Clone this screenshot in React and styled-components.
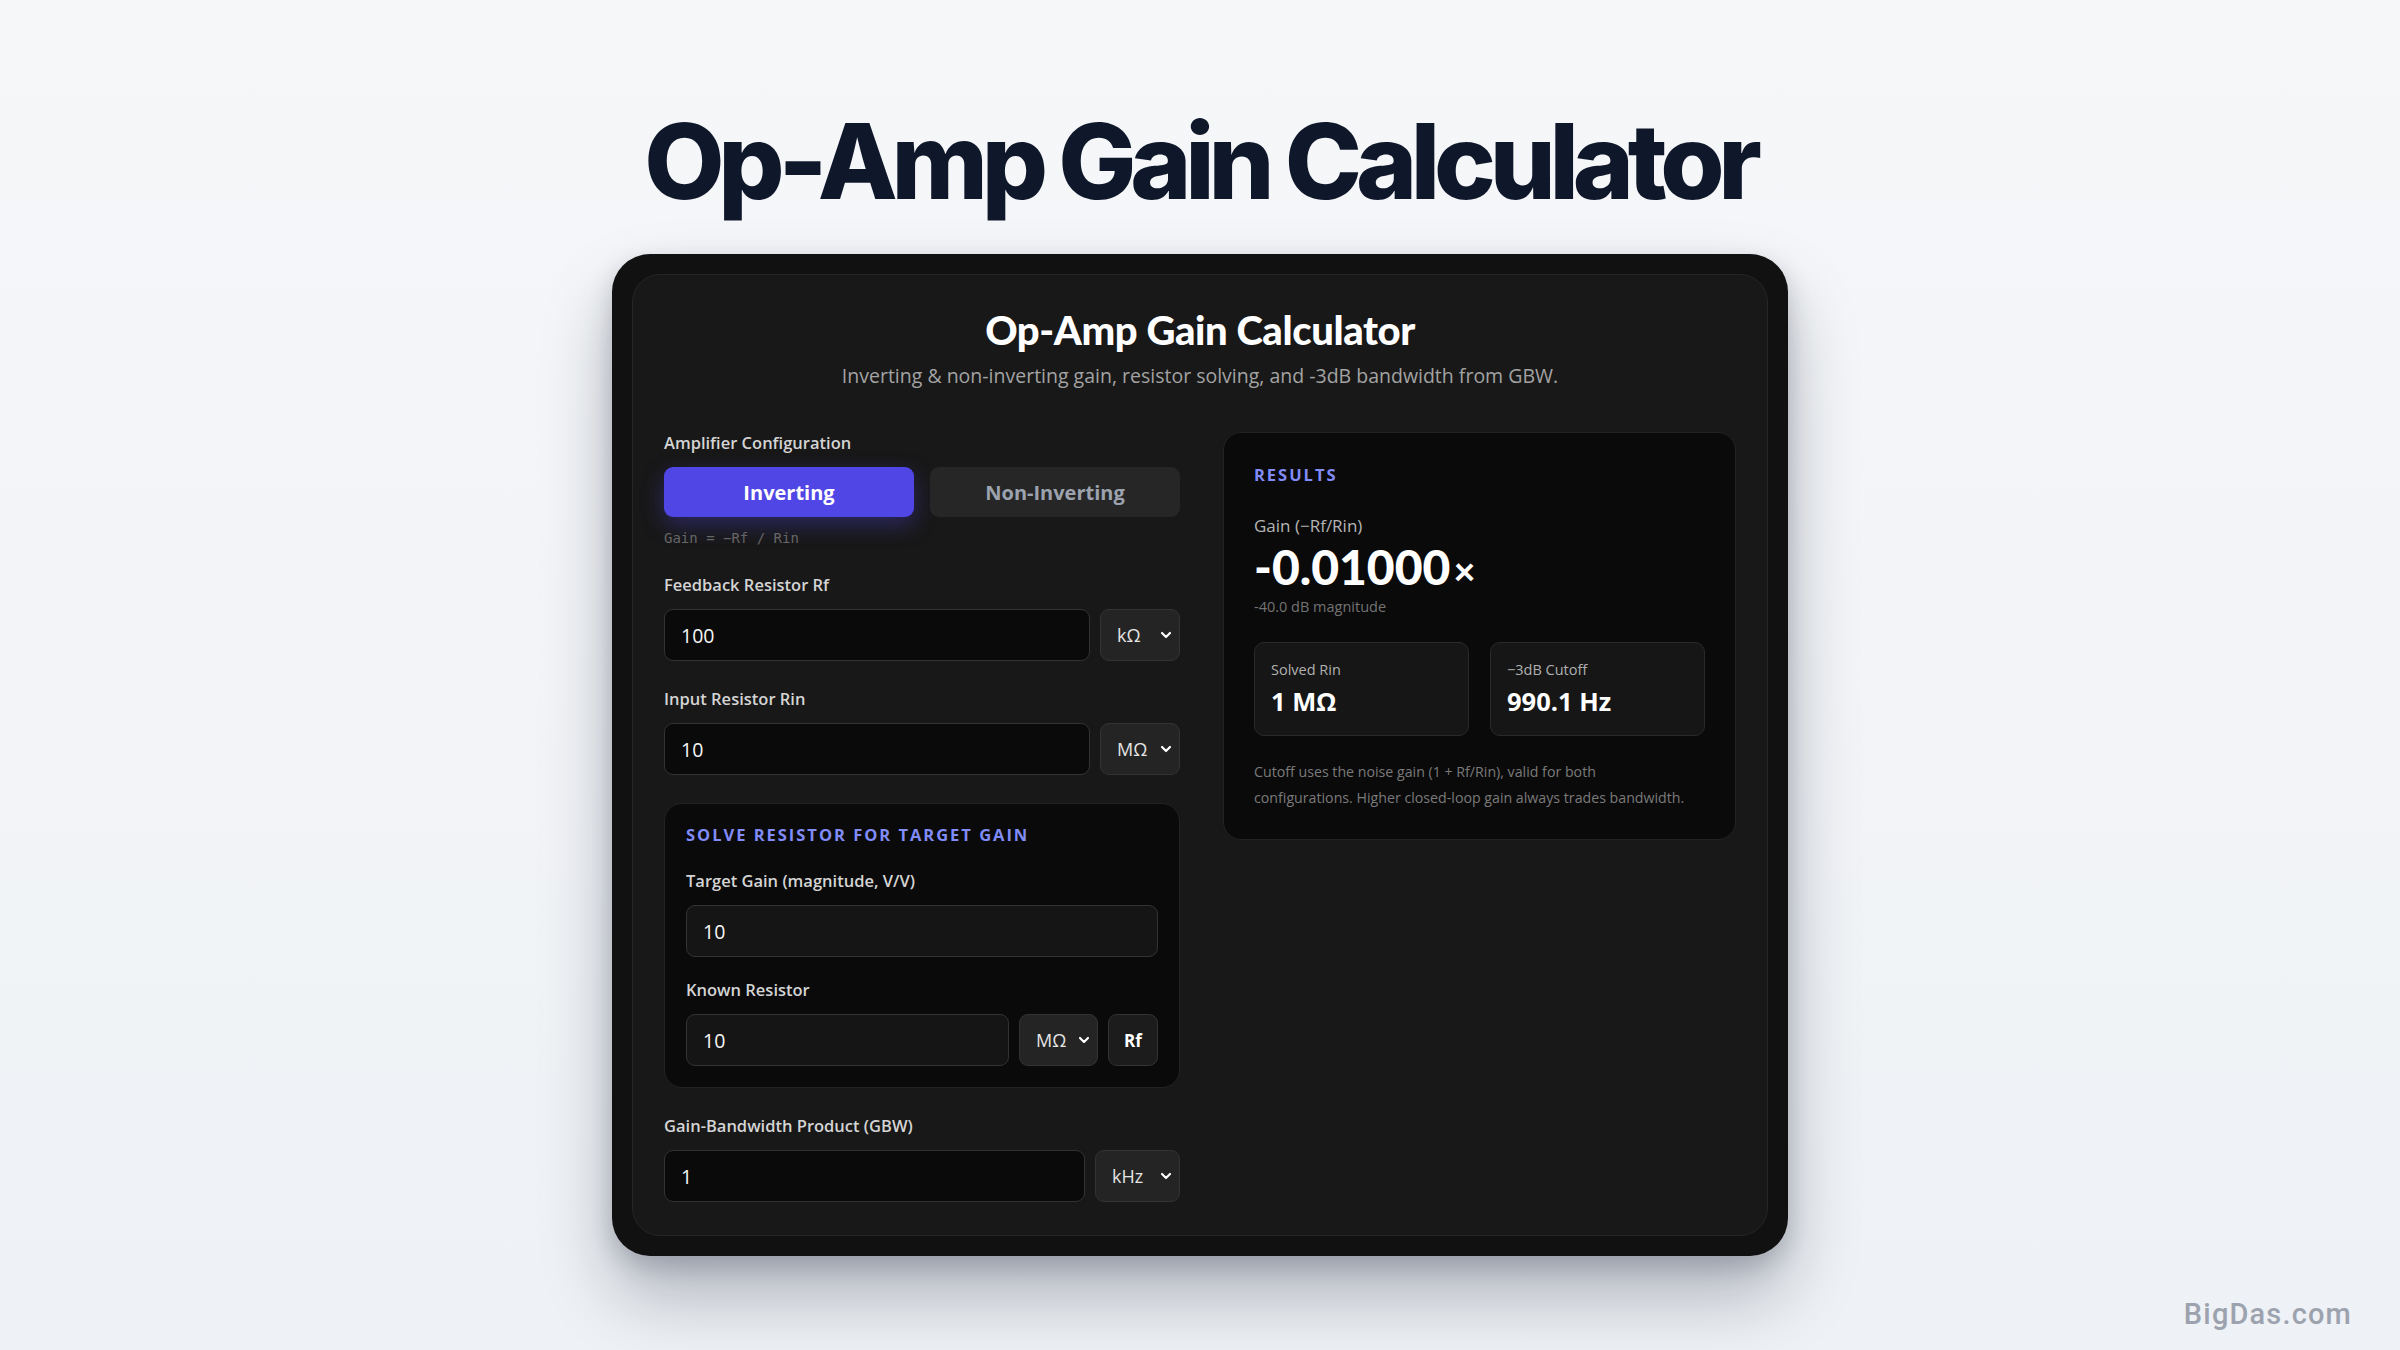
import React from "react"
import styled, { createGlobalStyle } from "styled-components"
import { ChevronDown } from "lucide-react"

const GlobalStyle = createGlobalStyle`
  * { box-sizing: border-box; }
  html, body {
    margin: 0;
    padding: 0;
  }
  body {
    font-family: "Open Sans", "Noto Sans", sans-serif;
    background: linear-gradient(180deg, #f6f7f9 0%, #eef1f5 100%);
    min-height: 100vh;
  }
`

const Page = styled.div`
  position: relative;
  min-height: 100vh;
  display: flex;
  flex-direction: column;
  align-items: center;
  padding-top: 105px;
`

const PageTitle = styled.h1`
  margin: 0 0 37px;
  font-family: Inter, "Liberation Sans", sans-serif;
  font-weight: 800;
  font-size: 104px;
  line-height: 112px;
  letter-spacing: -0.06em;
  color: #0f172a;
`

const Frame = styled.div`
  width: 1176px;
  padding: 20px;
  background: #111111;
  border-radius: 38px;
  box-shadow: 0 40px 70px rgba(15, 23, 42, 0.28), 0 10px 24px rgba(15, 23, 42, 0.18);
`

const Card = styled.div`
  background: #181818;
  border: 1px solid #262626;
  border-radius: 28px;
  padding: 30px 31px 33px;
`

const Header = styled.header`
  text-align: center;
  margin-bottom: 43px;
`

const Heading = styled.h2`
  margin: 0;
  font-family: Lato, "Open Sans", sans-serif;
  font-weight: 900;
  font-size: 40px;
  line-height: 50px;
  color: #ffffff;
  letter-spacing: -0.01em;
`

const Subtitle = styled.p`
  margin: 8px 0 0;
  font-size: 19.5px;
  line-height: 26px;
  color: #a3a3a3;
`

const Grid = styled.div`
  display: grid;
  grid-template-columns: 516px 513px;
  justify-content: space-between;
  align-items: start;
`

const Column = styled.div`
  display: flex;
  flex-direction: column;
`

const Field = styled.div`
  display: flex;
  flex-direction: column;
  gap: 13px;
  margin-top: ${(p) => p.$top || 0}px;
`

const Label = styled.label`
  font-size: 16.5px;
  line-height: 22px;
  font-weight: 600;
  color: #d4d4d4;
`

const Toggle = styled.div`
  display: grid;
  grid-template-columns: 1fr 1fr;
  gap: 16px;
`

const ToggleButton = styled.button`
  height: 50px;
  border: none;
  border-radius: 9px;
  font-family: inherit;
  font-size: 20px;
  font-weight: 700;
  background: ${(p) => (p.$active ? "#4f46e5" : "#262626")};
  color: ${(p) => (p.$active ? "#ffffff" : "#9ca3af")};
  box-shadow: ${(p) => (p.$active ? "0 8px 22px rgba(79, 70, 229, 0.35)" : "none")};
`

const Hint = styled.div`
  margin-top: 12px;
  font-family: "DejaVu Sans Mono", "Liberation Mono", monospace;
  font-size: 14px;
  line-height: 18px;
  color: #666666;
`

const Row = styled.div`
  display: flex;
  gap: 10px;
`

const Input = styled.div`
  flex: 1 1 auto;
  height: 52px;
  display: flex;
  align-items: center;
  padding: 0 16px;
  border: 1px solid #333333;
  border-radius: 9px;
  background: ${(p) => (p.$raised ? "#151515" : "#0a0a0a")};
  color: #f5f5f5;
  font-size: 19.5px;
`

const Select = styled.div`
  flex: none;
  width: ${(p) => p.$w || 80}px;
  height: 52px;
  display: flex;
  align-items: center;
  justify-content: space-between;
  padding: 0 5px 0 16px;
  border: 1px solid #333333;
  border-radius: 9px;
  background: #242424;
  color: #e5e5e5;
  font-size: 18px;

  svg {
    color: #ffffff;
  }
`

const SideButton = styled.button`
  flex: none;
  width: 50px;
  height: 52px;
  border: 1px solid #333333;
  border-radius: 9px;
  background: #1c1c1c;
  color: #ffffff;
  font-family: inherit;
  font-size: 17px;
  font-weight: 700;
`

const Panel = styled.section`
  margin-top: ${(p) => p.$top || 0}px;
  background: #0a0a0a;
  border: 1px solid #222222;
  border-radius: 18px;
  padding: ${(p) => p.$pad || "21px 21px 21px"};
`

const SectionTitle = styled.h3`
  margin: 0;
  font-size: 16.5px;
  line-height: 20px;
  font-weight: 700;
  letter-spacing: 0.12em;
  text-transform: uppercase;
  color: #818cf8;
`

const PanelFields = styled.div`
  display: flex;
  flex-direction: column;
  gap: 22px;
  margin-top: 25px;
`

const GainLabel = styled.div`
  margin-top: 30px;
  font-size: 17px;
  line-height: 22px;
  color: #b5b5b5;
`

const GainValue = styled.div`
  margin-top: 5px;
  font-family: Lato, "Open Sans", sans-serif;
  font-weight: 900;
  font-size: 48px;
  line-height: 50px;
  color: #ffffff;

  span {
    font-size: 38px;
    margin-left: 3px;
  }
`

const Db = styled.div`
  margin-top: 3px;
  font-size: 14.5px;
  line-height: 18px;
  color: #737373;
`

const Stats = styled.div`
  margin-top: 26px;
  display: grid;
  grid-template-columns: 1fr 1fr;
  gap: 21px;
`

const Stat = styled.div`
  height: 94px;
  padding: 17px 16px 0;
  border: 1px solid #2a2a2a;
  border-radius: 10px;
  background: #161616;
`

const StatLabel = styled.div`
  font-size: 14.5px;
  line-height: 20px;
  color: #b0b0b0;
`

const StatValue = styled.div`
  margin-top: 6px;
  font-size: 25.5px;
  line-height: 30px;
  font-weight: 700;
  color: #ffffff;
`

const Note = styled.p`
  margin: 23px 0 0;
  font-size: 14.2px;
  line-height: 26px;
  color: #7a7a7a;
`

const Watermark = styled.div`
  position: absolute;
  right: 48px;
  bottom: 19px;
  font-family: Roboto, "Open Sans", sans-serif;
  font-size: 29px;
  font-weight: 500;
  letter-spacing: 0.04em;
  color: #9ca3af;
`

const Chevron = () => <ChevronDown size={16} strokeWidth={3.2} />

export default function App() {
  return (
    <>
      <GlobalStyle />
      <Page>
        <PageTitle>Op-Amp Gain Calculator</PageTitle>

        <Frame>
          <Card>
            <Header>
              <Heading>Op-Amp Gain Calculator</Heading>
              <Subtitle>
                Inverting &amp; non-inverting gain, resistor solving, and -3dB bandwidth from GBW.
              </Subtitle>
            </Header>

            <Grid>
              <Column>
                <Field>
                  <Label>Amplifier Configuration</Label>
                  <Toggle>
                    <ToggleButton $active>Inverting</ToggleButton>
                    <ToggleButton>Non-Inverting</ToggleButton>
                  </Toggle>
                </Field>
                <Hint>Gain = −Rf / Rin</Hint>

                <Field $top={27}>
                  <Label>Feedback Resistor Rf</Label>
                  <Row>
                    <Input>100</Input>
                    <Select>
                      kΩ <Chevron />
                    </Select>
                  </Row>
                </Field>

                <Field $top={27}>
                  <Label>Input Resistor Rin</Label>
                  <Row>
                    <Input>10</Input>
                    <Select>
                      MΩ <Chevron />
                    </Select>
                  </Row>
                </Field>

                <Panel $top={28}>
                  <SectionTitle>Solve resistor for target gain</SectionTitle>
                  <PanelFields>
                    <Field>
                      <Label>Target Gain (magnitude, V/V)</Label>
                      <Input $raised>10</Input>
                    </Field>
                    <Field>
                      <Label>Known Resistor</Label>
                      <Row>
                        <Input $raised>10</Input>
                        <Select $w={79}>
                          MΩ <Chevron />
                        </Select>
                        <SideButton>Rf</SideButton>
                      </Row>
                    </Field>
                  </PanelFields>
                </Panel>

                <Field $top={27}>
                  <Label>Gain-Bandwidth Product (GBW)</Label>
                  <Row>
                    <Input>1</Input>
                    <Select $w={85}>
                      kHz <Chevron />
                    </Select>
                  </Row>
                </Field>
              </Column>

              <Panel $pad="32px 30px 28px">
                <SectionTitle>Results</SectionTitle>
                <GainLabel>Gain (−Rf/Rin)</GainLabel>
                <GainValue>
                  -0.01000<span>×</span>
                </GainValue>
                <Db>-40.0 dB magnitude</Db>

                <Stats>
                  <Stat>
                    <StatLabel>Solved Rin</StatLabel>
                    <StatValue>1 MΩ</StatValue>
                  </Stat>
                  <Stat>
                    <StatLabel>−3dB Cutoff</StatLabel>
                    <StatValue>990.1 Hz</StatValue>
                  </Stat>
                </Stats>

                <Note>
                  Cutoff uses the noise gain (1 + Rf/Rin), valid for both
                  <br />
                  configurations. Higher closed-loop gain always trades bandwidth.
                </Note>
              </Panel>
            </Grid>
          </Card>
        </Frame>

        <Watermark>BigDas.com</Watermark>
      </Page>
    </>
  )
}
